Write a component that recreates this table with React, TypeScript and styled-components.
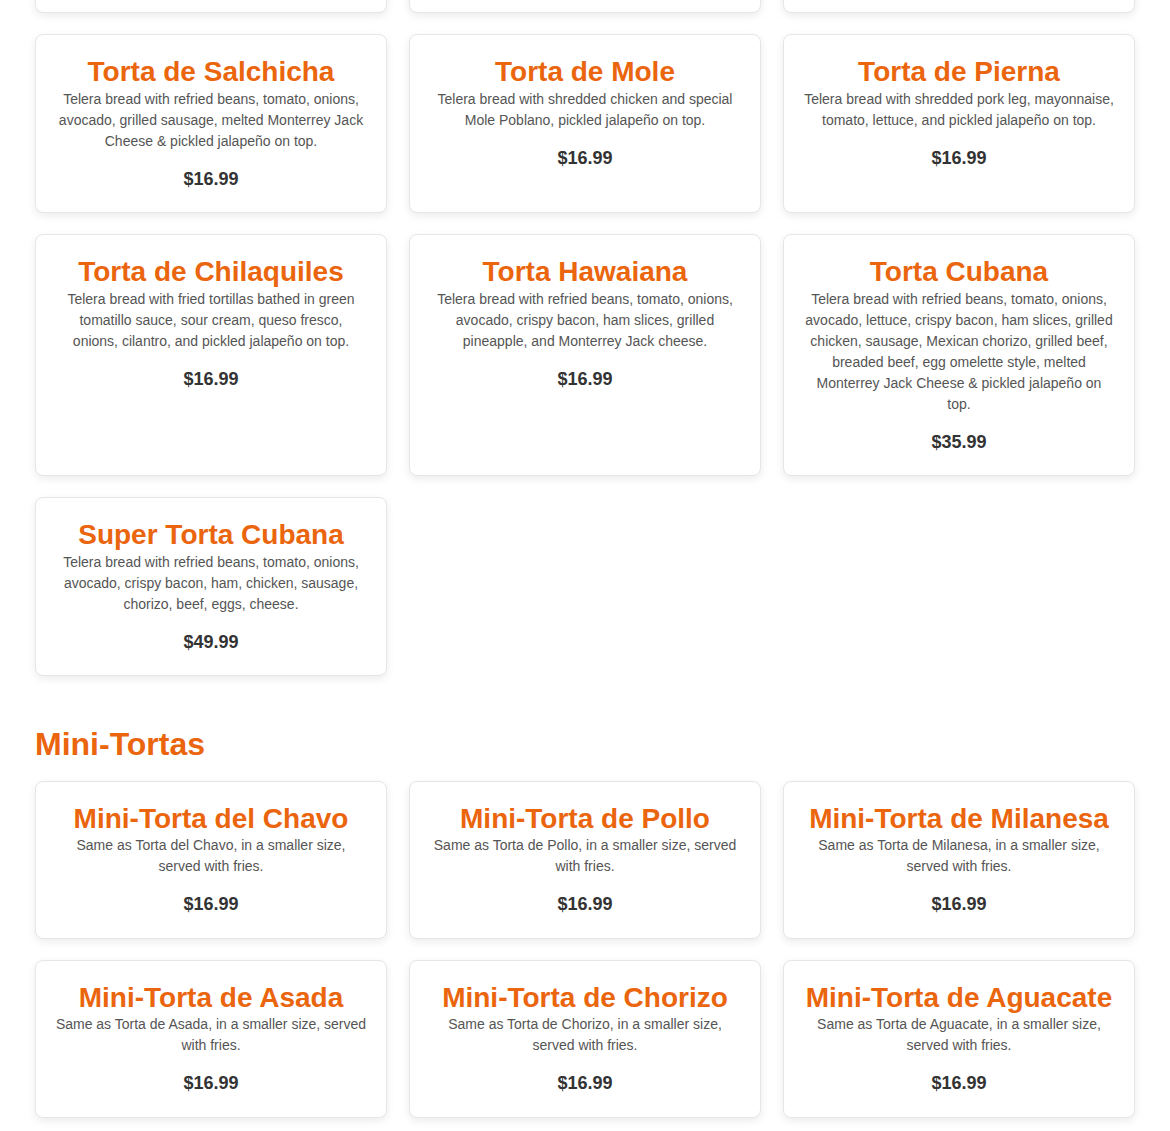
import React from "react";
import styled, { createGlobalStyle } from "styled-components";

const GlobalStyle = createGlobalStyle`
  html, body {
    margin: 0;
    padding: 0;
    background: #ffffff;
    font-family: "Liberation Sans", Arial, sans-serif;
    overflow: hidden;
  }
  * {
    box-sizing: border-box;
  }
`;

const Page = styled.main`
  max-width: 1100px;
  margin: 0 auto;
`;

const Section = styled.section`
  margin-bottom: 49px;
`;

const SectionTitle = styled.h2`
  font-size: 32px;
  line-height: 1.2;
  font-weight: 700;
  color: #ea650d;
  margin: 0 0 17px;
`;

const Grid = styled.div<{ $pull?: number }>`
  display: grid;
  grid-template-columns: repeat(3, 1fr);
  gap: 21px 22px;
  margin-top: ${({ $pull }) => ($pull ? `-${$pull}px` : "0")};
`;

const Card = styled.article`
  background: #ffffff;
  border: 1px solid #e6e6e6;
  border-radius: 8px;
  box-shadow: 0 3px 8px rgba(0, 0, 0, 0.08);
  padding: 20px 19px 19.5px;
  text-align: center;
`;

const CardStub = styled(Card)`
  height: 60px;
`;

const ItemName = styled.h3`
  font-size: 28px;
  line-height: 1.2;
  font-weight: 700;
  color: #ea650d;
  margin: 0;
`;

const ItemDesc = styled.p`
  font-size: 14px;
  line-height: 21px;
  color: #555555;
  margin: 0 0 14px;
`;

const ItemPrice = styled.p`
  font-size: 18px;
  line-height: 27px;
  font-weight: 700;
  color: #333333;
  margin: 0;
`;

type Item = { name: string; desc: string; price: string };

const tortas: Item[] = [
  {
    name: "Torta de Salchicha",
    desc: "Telera bread with refried beans, tomato, onions, avocado, grilled sausage, melted Monterrey Jack Cheese & pickled jalapeño on top.",
    price: "$16.99",
  },
  {
    name: "Torta de Mole",
    desc: "Telera bread with shredded chicken and special Mole Poblano, pickled jalapeño on top.",
    price: "$16.99",
  },
  {
    name: "Torta de Pierna",
    desc: "Telera bread with shredded pork leg, mayonnaise, tomato, lettuce, and pickled jalapeño on top.",
    price: "$16.99",
  },
  {
    name: "Torta de Chilaquiles",
    desc: "Telera bread with fried tortillas bathed in green tomatillo sauce, sour cream, queso fresco, onions, cilantro, and pickled jalapeño on top.",
    price: "$16.99",
  },
  {
    name: "Torta Hawaiana",
    desc: "Telera bread with refried beans, tomato, onions, avocado, crispy bacon, ham slices, grilled pineapple, and Monterrey Jack cheese.",
    price: "$16.99",
  },
  {
    name: "Torta Cubana",
    desc: "Telera bread with refried beans, tomato, onions, avocado, lettuce, crispy bacon, ham slices, grilled chicken, sausage, Mexican chorizo, grilled beef, breaded beef, egg omelette style, melted Monterrey Jack Cheese & pickled jalapeño on top.",
    price: "$35.99",
  },
  {
    name: "Super Torta Cubana",
    desc: "Telera bread with refried beans, tomato, onions, avocado, crispy bacon, ham, chicken, sausage, chorizo, beef, eggs, cheese.",
    price: "$49.99",
  },
];

const miniTortas: Item[] = [
  { name: "Mini-Torta del Chavo", desc: "Same as Torta del Chavo, in a smaller size, served with fries.", price: "$16.99" },
  { name: "Mini-Torta de Pollo", desc: "Same as Torta de Pollo, in a smaller size, served with fries.", price: "$16.99" },
  { name: "Mini-Torta de Milanesa", desc: "Same as Torta de Milanesa, in a smaller size, served with fries.", price: "$16.99" },
  { name: "Mini-Torta de Asada", desc: "Same as Torta de Asada, in a smaller size, served with fries.", price: "$16.99" },
  { name: "Mini-Torta de Chorizo", desc: "Same as Torta de Chorizo, in a smaller size, served with fries.", price: "$16.99" },
  { name: "Mini-Torta de Aguacate", desc: "Same as Torta de Aguacate, in a smaller size, served with fries.", price: "$16.99" },
];

function MenuCard({ item }: { item: Item }) {
  return (
    <Card>
      <ItemName>{item.name}</ItemName>
      <ItemDesc>{item.desc}</ItemDesc>
      <ItemPrice>{item.price}</ItemPrice>
    </Card>
  );
}

export default function App() {
  return (
    <>
      <GlobalStyle />
      <Page>
        <Section>
          {/* the page is scrolled: only the foot of the previous row shows */}
          <Grid $pull={47}>
            <CardStub />
            <CardStub />
            <CardStub />
            {tortas.map((item) => (
              <MenuCard key={item.name} item={item} />
            ))}
          </Grid>
        </Section>

        <Section>
          <SectionTitle>Mini-Tortas</SectionTitle>
          <Grid>
            {miniTortas.map((item) => (
              <MenuCard key={item.name} item={item} />
            ))}
          </Grid>
        </Section>
      </Page>
    </>
  );
}
